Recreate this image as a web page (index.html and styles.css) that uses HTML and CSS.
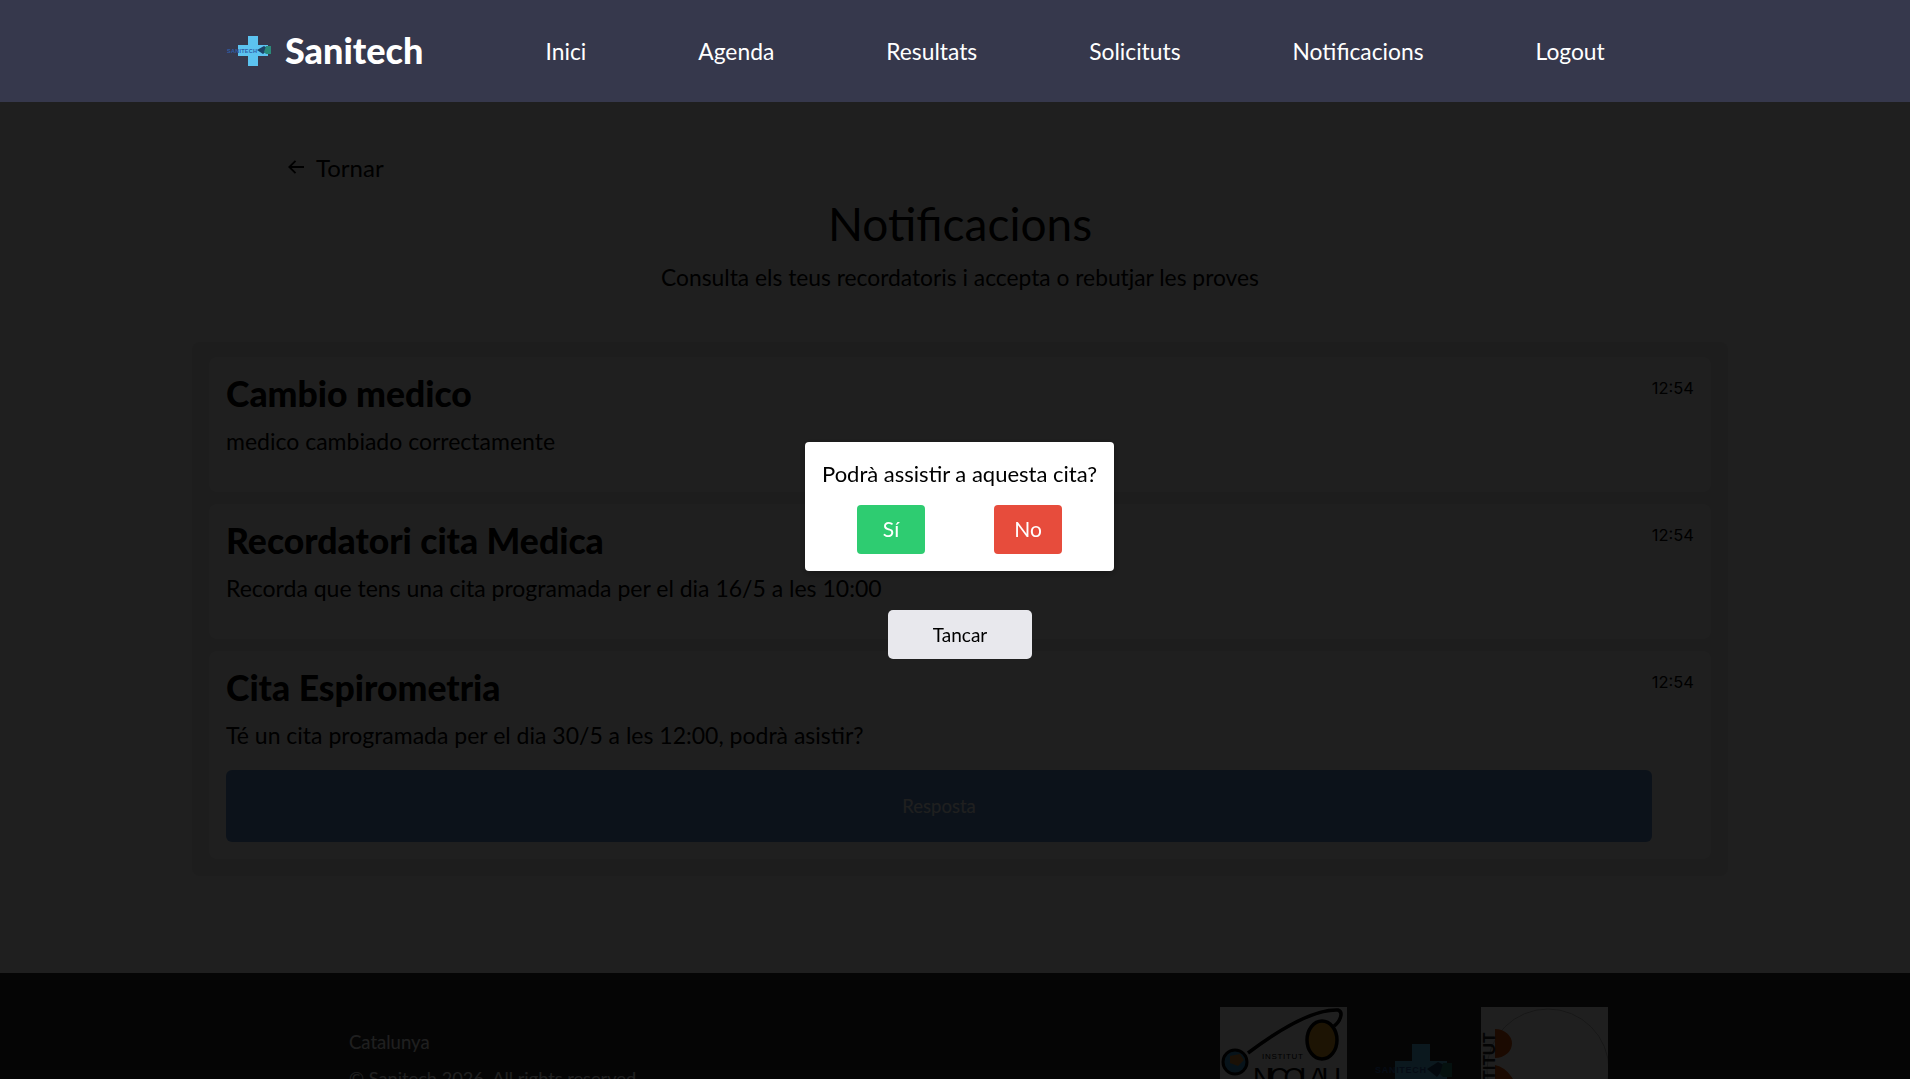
FILE: index.html
```html
<!DOCTYPE html>
<html lang="ca">
<head>
<meta charset="utf-8">
<title>Sanitech</title>
<link rel="stylesheet" href="styles.css">
</head>
<body>
<header class="topbar">
  <a class="brand">
    <svg class="brand-mark" viewBox="0 0 46 31" width="46" height="31" aria-hidden="true">
      <path d="M22 0h10v9h10v11H32v10H22V20H12V9h10z" fill="#5cc3f0"/>
      <text x="1" y="17" font-family="Liberation Sans" font-size="5.500" font-weight="700" textLength="30" fill="#2f5fa8">SANITECH</text>
      <path d="M31 14l7-4 5 3-6 5z" fill="#1d4468"/>
      <path d="M40 10h5v8h-5l-2-2z" fill="#2a8a7a"/>
    </svg>
    <span class="brand-name">Sanitech</span>
  </a>
  <nav class="nav">
    <a>Inici</a><a>Agenda</a><a>Resultats</a><a>Solicituts</a><a>Notificacions</a><a>Logout</a>
  </nav>
</header>

<main class="page">
  <a class="back">
    <svg viewBox="0 0 16 16" width="16" height="16" aria-hidden="true"><path d="M16 8H1.500M7.500 1.800L1.300 8l6.200 6.200" fill="none" stroke="#000" stroke-width="1.800"/></svg>
    <span>Tornar</span>
  </a>
  <h1 class="title">Notificacions</h1>
  <p class="subtitle">Consulta els teus recordatoris i accepta o rebutjar les proves</p>

  <section class="list">
    <article class="card">
      <time class="stamp">12:54</time>
      <h2>Cambio medico</h2>
      <p>medico cambiado correctamente</p>
    </article>
    <article class="card">
      <time class="stamp">12:54</time>
      <h2>Recordatori cita Medica</h2>
      <p>Recorda que tens una cita programada per el dia 16/5 a les 10:00</p>
    </article>
    <article class="card card-last">
      <time class="stamp">12:54</time>
      <h2>Cita Espirometria</h2>
      <p>Té un cita programada per el dia 30/5 a les 12:00, podrà asistir?</p>
      <button class="answer">Resposta</button>
    </article>
  </section>
</main>

<footer class="footer">
  <div class="footer-text">
    <p>Catalunya</p>
    <p class="copyright">© Sanitech 2026. All rights reserved</p>
  </div>
  <div class="footer-logos">
    <svg class="flogo" viewBox="0 0 127 127" aria-hidden="true">
      <rect width="127" height="127" fill="#fff"/>
      <path d="M28 46C60 22 95 2 118 3c6 2 2 12-4 16" fill="none" stroke="#000" stroke-width="3.500"/>
      <ellipse cx="102" cy="33" rx="15" ry="19" fill="#e8a020" stroke="#000" stroke-width="3.500"/>
      <circle cx="15" cy="55" r="12" fill="#3a9ad0" stroke="#000" stroke-width="3"/>
      <path d="M10 49l10-2 4 6-6 6-8-3z" fill="#d98a30"/>
      <text x="42" y="52" font-family="Liberation Sans" font-size="8" textLength="41" fill="#000">INSTITUT</text>
      <text x="33" y="80" font-family="Liberation Sans" font-size="27" textLength="88" fill="#000">NICOLAU</text>
    </svg>
    <svg class="flogo flogo-mid" viewBox="0 0 80 127" aria-hidden="true">
      <path d="M37 37h18v17h17v18H55v17H37V72H20V54h17z" fill="#5cc3f0"/>
      <text x="0" y="66" font-family="Liberation Sans" font-size="9" font-weight="700" textLength="51" fill="#2f5fa8">SANITECH</text>
      <path d="M52 62l11-7 8 4-9 11z" fill="#1d4468"/>
      <path d="M68 56h9v14h-9l-3-3z" fill="#2a8a7a"/>
    </svg>
    <svg class="flogo" viewBox="0 0 127 127" aria-hidden="true">
      <rect width="127" height="127" fill="#fff"/>
      <circle cx="67" cy="63" r="61" fill="none" stroke="#bbb"/>
      <path d="M14 22a17 14.500 0 0 1 0 29zM14 58a28 35 0 0 1 0 69z" fill="#d9560e"/>
      <text transform="rotate(-90 14 102)" x="14" y="102" font-family="Liberation Sans" font-size="17" font-weight="700" fill="#222">INSTITUT</text>
    </svg>
  </div>
</footer>

<div class="overlay">
  <div class="dialog">
    <p>Podrà assistir a aquesta cita?</p>
    <div class="dialog-actions">
      <button class="btn-yes">Sí</button>
      <button class="btn-no">No</button>
    </div>
  </div>
  <button class="btn-close">Tancar</button>
</div>
</body>
</html>
```

FILE: styles.css
```css
* { box-sizing: border-box; }
html { overflow: hidden; height: 100%; }
body {
  margin: 0;
  width: 1920px;
  font-family: "Lato", "Noto Sans", sans-serif;
  background: #f8f8f8;
  color: #000;
  height: 100%;
}
p, h1, h2 { margin: 0; }
button { font-family: inherit; border: 0; cursor: pointer; }

.topbar {
  position: relative;
  z-index: 20;
  height: 102px;
  background: #36384c;
  display: flex;
  align-items: center;
  padding-left: 226px;
}
.brand { display: flex; align-items: center; gap: 13px; width: 319.500px; }
.brand-name { color: #fff; font-size: 36px; font-weight: 900; line-height: 1; position: relative; top: -1px; }
.nav { display: flex; gap: 112px; color: #fff; font-size: 22.800px; }

.page { padding-top: 49px; }
.back { display: flex; align-items: center; gap: 12px; margin-left: 288px; font-size: 24px; height: 32px; }
.title { text-align: center; font-size: 46px; font-weight: 400; margin-top: 12px; line-height: 58px; }
.subtitle { text-align: center; font-size: 22.800px; margin-top: 9px; line-height: 30px; }

.list {
  width: 1536px;
  margin: 50px auto 0;
  padding: 15px 17px 17px;
  background: #ebebeb;
  border-radius: 8px;
  display: flex;
  flex-direction: column;
  gap: 12px;
}
.card {
  position: relative;
  background: #fff;
  border-radius: 8px;
  padding: 15px 17px;
  height: 135px;
}
.card-last { height: 208px; }
.card h2 { font-size: 35.500px; font-weight: 900; line-height: 44px; }
.card p { font-size: 23px; line-height: 30px; margin-top: 10px; }
.stamp {
  position: absolute;
  top: 21px;
  right: 17px;
  font-family: "Inter", sans-serif;
  font-size: 16.500px;
}
.answer {
  display: block;
  width: 1426px;
  height: 72px;
  margin-top: 20px;
  border-radius: 6px;
  background: #6496d2;
  color: #fff;
  font-size: 18.500px;
}

.footer {
  margin-top: 97px;
  height: 300px;
  background: #2a2a2a;
  display: flex;
  padding: 34px 0 0 349px;
  color: #fff;
  font-size: 18.500px;
}
.footer-text { width: 871px; padding-top: 24px; }
.footer-text p { margin-bottom: 14px; }
.footer-text .copyright { font-size: 18.200px; }
.footer-logos { display: flex; gap: 26px; }
.flogo { width: 127px; height: 127px; }
.flogo-mid { width: 80px; margin-left: 2px; }

.overlay {
  position: fixed;
  top: 0;
  left: 0;
  width: 1920px;
  height: 100%;
  z-index: 10;
  background: rgba(0, 0, 0, .88);
  display: flex;
  flex-direction: column;
  align-items: center;
  padding-top: 442px;
}
.dialog {
  width: 309px;
  height: 129px;
  margin-right: 1px;
  background: #fff;
  border-radius: 4px;
  padding-top: 18px;
  text-align: center;
  font-size: 22px;
  box-shadow: 0 2px 8px rgba(0,0,0,.3);
}
.dialog p { line-height: 28px; }
.dialog-actions { display: flex; justify-content: center; gap: 69px; margin-top: 17px; }
.dialog-actions button {
  width: 68px;
  height: 49px;
  border-radius: 4px;
  color: #fff;
  font-size: 21px;
  padding-bottom: 3px;
}
.btn-yes { background: #2ecc71; }
.btn-no { background: #e74c3c; }
.btn-close {
  margin-top: 39px;
  width: 144px;
  height: 49px;
  border-radius: 5px;
  background: #e8e8ed;
  color: #000;
  font-size: 19px;
  padding-bottom: 2px;
}
```
